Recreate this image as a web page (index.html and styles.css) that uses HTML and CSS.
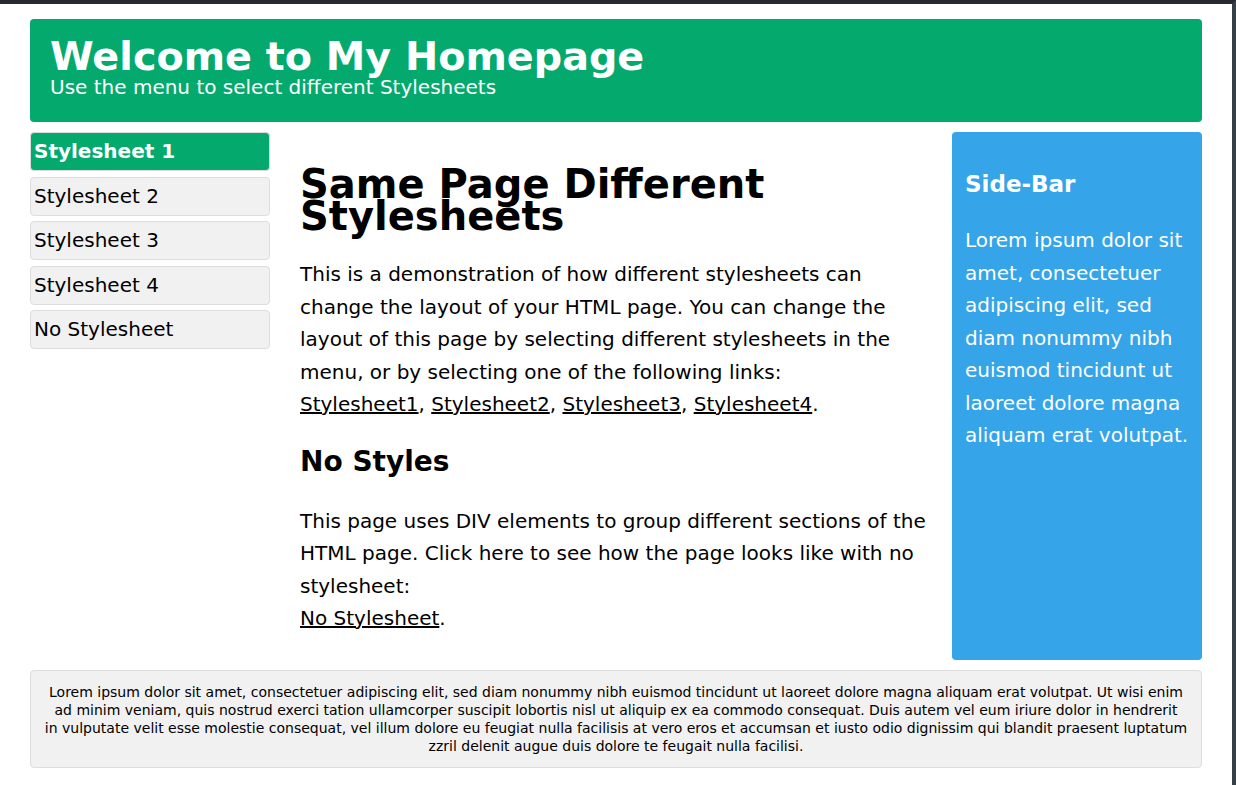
FILE: index.html
```html
<!DOCTYPE html>
<html lang="en">
<head>
<meta charset="utf-8">
<title>Same Page Different Stylesheets</title>
<link rel="stylesheet" href="styles.css">
</head>
<body>
<div class="page">
  <header class="header">
    <h1 class="site-title">Welcome to My Homepage</h1>
    <p class="site-sub">Use the menu to select different Stylesheets</p>
  </header>
  <div class="row">
    <nav class="menu">
      <a class="menu-item active">Stylesheet 1</a>
      <a class="menu-item">Stylesheet 2</a>
      <a class="menu-item">Stylesheet 3</a>
      <a class="menu-item">Stylesheet 4</a>
      <a class="menu-item">No Stylesheet</a>
    </nav>
    <main class="main">
      <h1 class="main-title">Same Page Different Stylesheets</h1>
      <p class="text">This is a demonstration of how different stylesheets can change the layout of your HTML page. You can change the layout of this page by selecting different stylesheets in the menu, or by selecting one of the following links:<br><a class="link">Stylesheet1</a>, <a class="link">Stylesheet2</a>, <a class="link">Stylesheet3</a>, <a class="link">Stylesheet4</a>.</p>
      <h2 class="sub-title">No Styles</h2>
      <p class="text">This page uses DIV elements to group different sections of the HTML page. Click here to see how the page looks like with no stylesheet:<br><a class="link">No Stylesheet</a>.</p>
    </main>
    <aside class="sidebar">
      <h3 class="side-title">Side-Bar</h3>
      <p class="side-text">Lorem ipsum dolor sit amet, consectetuer adipiscing elit, sed diam nonummy nibh euismod tincidunt ut laoreet dolore magna aliquam erat volutpat.</p>
    </aside>
  </div>
  <footer class="footer">
    <p class="foot-text">Lorem ipsum dolor sit amet, consectetuer adipiscing elit, sed diam nonummy nibh euismod tincidunt ut laoreet dolore magna aliquam erat volutpat. Ut wisi enim ad minim veniam, quis nostrud exerci tation ullamcorper suscipit lobortis nisl ut aliquip ex ea commodo consequat. Duis autem vel eum iriure dolor in hendrerit in&nbsp;vulputate velit esse molestie consequat, vel illum dolore eu feugiat nulla facilisis at vero eros et accumsan et iusto odio dignissim qui blandit praesent luptatum zzril delenit augue duis dolore te feugait nulla facilisi.</p>
  </footer>
</div>
</body>
</html>
```

FILE: styles.css
```css
html, body {
  margin: 0;
  padding: 0;
}
body {
  min-height: 100vh;
  box-sizing: border-box;
  border-top: 4px solid #262833;
  border-right: 4px solid #373f47;
  background: #fff;
  font-family: "DejaVu Sans", Verdana, sans-serif;
  color: #000;
}
.page {
  padding: 15px 30px 0 30px;
}
.header {
  background: #04aa6d;
  color: #fff;
  border-radius: 4px;
  padding: 17px 20px 24px 20px;
}
.site-title {
  margin: 0;
  font-size: 39.7px;
  line-height: 40px;
  font-weight: bold;
}
.site-sub {
  margin: 0;
  font-size: 20px;
  line-height: 22px;
}
.row {
  display: flex;
  align-items: flex-start;
  margin-top: 10px;
}
.menu {
  width: 240px;
  flex: none;
  display: flex;
  flex-direction: column;
  gap: 5.5px;
}
.menu-item {
  display: block;
  background: #f1f1f1;
  border: 1px solid #ddd;
  border-radius: 4px;
  padding: 7px 3px;
  font-size: 20px;
  line-height: 23px;
  color: #000;
}
.menu-item.active {
  background: #04aa6d;
  color: #fff;
  font-weight: bold;
}
.main {
  flex: 1;
  padding: 0 15px 0 30px;
}
.main-title {
  margin: 36px 0 0 0;
  font-size: 40px;
  line-height: 32px;
  font-weight: bold;
}
.text {
  margin: 26px 0 0 0;
  font-size: 20px;
  line-height: 32.5px;
}
.link {
  color: #000;
  text-decoration: underline;
}
.sub-title {
  margin: 24px 0 0 0;
  font-size: 28px;
  line-height: 34px;
  font-weight: bold;
}
.sidebar {
  width: 250px;
  flex: none;
  box-sizing: border-box;
  background: #35a4e8;
  color: #fff;
  border-radius: 4px;
  padding: 38px 13px 208px 13px;
}
.side-title {
  margin: 0;
  font-size: 23px;
  line-height: 28px;
  font-weight: bold;
}
.side-text {
  margin: 26px 0 0 0;
  font-size: 20px;
  line-height: 32.5px;
}
.footer {
  margin-top: 10px;
  background: #f1f1f1;
  border: 1px solid #ddd;
  border-radius: 4px;
  padding: 12px 13px 12px 13px;
  text-align: center;
}
.foot-text {
  margin: 0;
  font-size: 14px;
  line-height: 18px;
}
```
